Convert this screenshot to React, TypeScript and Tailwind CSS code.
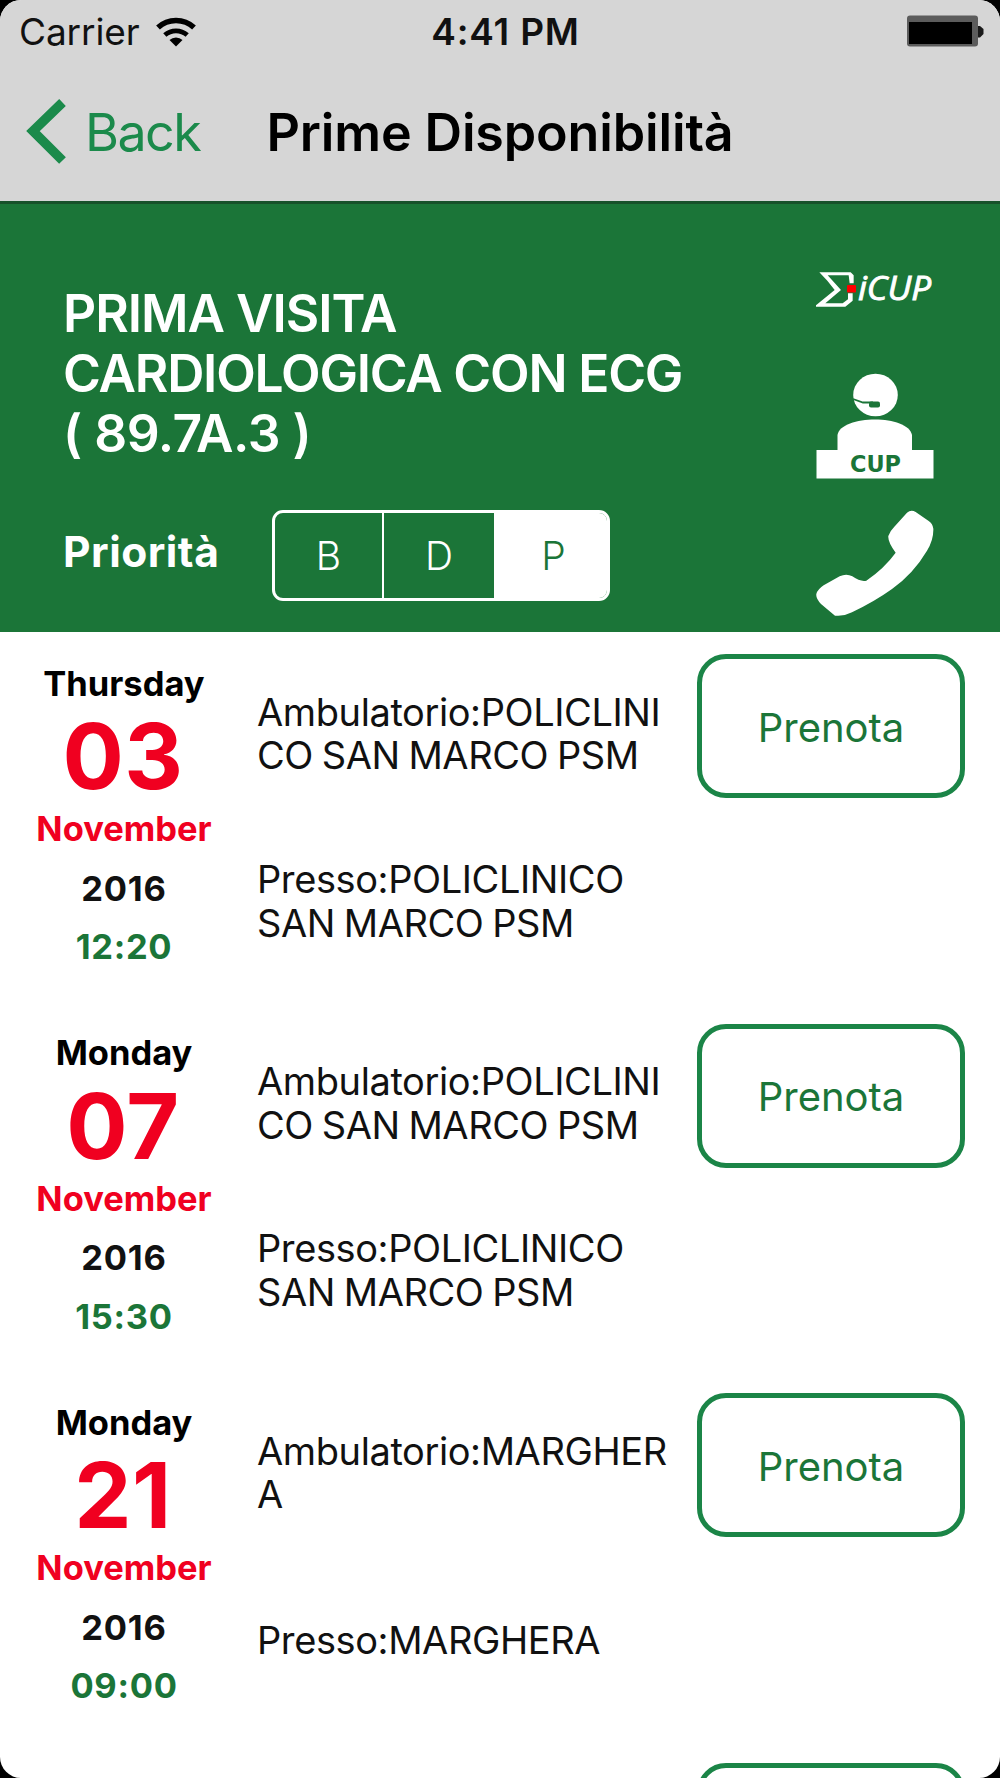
interface Slot {
  day: string
  date: string
  month: string
  year: string
  time: string
  clinic: string[]
  place: string[]
}

const SLOTS: Slot[] = [
  {
    day: 'Thursday',
    date: '03',
    month: 'November',
    year: '2016',
    time: '12:20',
    clinic: ['Ambulatorio:POLICLINI', 'CO SAN MARCO PSM'],
    place: ['Presso:POLICLINICO', 'SAN MARCO PSM'],
  },
  {
    day: 'Monday',
    date: '07',
    month: 'November',
    year: '2016',
    time: '15:30',
    clinic: ['Ambulatorio:POLICLINI', 'CO SAN MARCO PSM'],
    place: ['Presso:POLICLINICO', 'SAN MARCO PSM'],
  },
  {
    day: 'Monday',
    date: '21',
    month: 'November',
    year: '2016',
    time: '09:00',
    clinic: ['Ambulatorio:MARGHER', 'A'],
    place: ['Presso:MARGHERA'],
  },
]

function WifiIcon() {
  return (
    <svg width="40" height="32" viewBox="0 0 40 32" fill="none" stroke="#000" aria-hidden="true">
      <path d="M2 12.5 A26.5 26.5 0 0 1 38 12.5" strokeWidth="5.5" />
      <path d="M8.8 20 A17 17 0 0 1 31.2 20" strokeWidth="4.8" />
      <path d="M13.5 25 A9.5 9.5 0 0 1 26.5 25 L20 31.5 Z" fill="#000" stroke="none" />
    </svg>
  )
}

function BatteryIcon() {
  return (
    <svg width="78" height="32" viewBox="0 0 78 32" aria-hidden="true">
      <rect x="0" y="0.5" width="71" height="31" rx="3" fill="#5c5c5c" />
      <rect x="2" y="7" width="63" height="22" fill="#000" />
      <path d="M71 11 H73 L76.5 14 V19 L73 22.5 H71 Z" fill="#1a1a1a" />
    </svg>
  )
}

function StatusBar() {
  return (
    <div className="grid h-[62px] grid-cols-3 items-center text-[37px] leading-[60px] text-[#111]">
      <div className="flex items-center pl-[19px]">
        <span className="pt-[2px] tracking-[-0.1px]">Carrier</span>
        <span className="ml-[16px] flex">
          <WifiIcon />
        </span>
      </div>
      <span className="pt-[2px] pl-[11px] text-center font-semibold tracking-[0.8px]">4:41 PM</span>
      <div className="flex justify-end pr-[15px]">
        <BatteryIcon />
      </div>
    </div>
  )
}

function NavBar() {
  return (
    <div className="relative flex h-[139px] items-center justify-center">
      <button className="absolute left-[26px] flex items-center text-[52px] text-[#1b8a4b]">
        <svg width="42" height="67" viewBox="0 0 42 67" fill="none" aria-hidden="true">
          <path d="M36.5 4.5 L7 33 L36.5 62.5" stroke="currentColor" strokeWidth="9.5" />
        </svg>
        <span className="ml-[17px] pt-[2px] tracking-[-1.6px]">Back</span>
      </button>
      <h1 className="pt-[2px] text-[52px] font-semibold tracking-[-0.15px] text-black">Prime Disponibilità</h1>
    </div>
  )
}

function ICupLogo() {
  return (
    <svg width="120" height="38" viewBox="0 0 120 38" className="overflow-visible" aria-hidden="true">
      <g transform="scale(0.3333) translate(-105 -90)" fill="#fff">
        <path d="M118 97 H212 L221 106 V130 H209 L206 106 H143 L183 150 L136 190 H188 L204 178 V160 H218 V182 L196 200 H108 V196 L164 150 L142 122 Z" />
      </g>
      <rect x="32" y="15" width="9" height="7.5" rx="1" fill="#f00" />
      <text
        x="43"
        y="30"
        fill="#fff"
        stroke="#fff"
        strokeWidth="0.9"
        fontFamily="'Open Sans', 'Noto Sans', sans-serif"
        fontStyle="italic"
        fontSize="33"
        textLength="73"
        lengthAdjust="spacingAndGlyphs"
      >
        iCUP
      </text>
    </svg>
  )
}

function OperatorIcon() {
  return (
    <svg width="120" height="106" viewBox="0 0 120 106" aria-hidden="true">
      <ellipse cx="60.5" cy="22" rx="22.3" ry="21.3" fill="#fff" />
      <path d="M38 26 L48 29.5 H58" stroke="#1b7538" strokeWidth="1.8" fill="none" />
      <rect x="54" y="28.5" width="11" height="6" rx="2" fill="#1b7538" />
      <path d="M22.5 78 V62 C24 52 42 46.5 60 46.5 C78 46.5 95 52 97 62 V78 Z" fill="#fff" />
      <rect x="1.5" y="77" width="117" height="28.5" fill="#fff" />
      <text
        x="35"
        y="98.5"
        fill="#1b7538"
        fontFamily="'DejaVu Sans', sans-serif"
        fontWeight="700"
        fontSize="23.5"
        textLength="51"
        lengthAdjust="spacingAndGlyphs"
      >
        CUP
      </text>
    </svg>
  )
}

function PhoneIcon() {
  return (
    <svg width="118" height="107" viewBox="107 810 354 321" fill="#fff" aria-hidden="true">
      <path d="M380 818 Q392 808 406 816 L444 842 Q457 850 459 866 Q460 900 440 932 Q400 1000 335 1047 Q285 1083 215 1117 Q190 1130 164 1127 L122 1092 Q106 1074 108 1062 Q112 1048 130 1036 L178 1009 Q198 1000 216 1009 Q240 1026 258 1022 Q312 985 346 938 Q322 905 324 888 Q328 874 342 860 Z" />
    </svg>
  )
}

function ServiceHeader() {
  return (
    <section className="flex h-[431px] shrink-0 justify-between border-t-[3px] border-[#17512a] bg-[#1b7538] pr-[65px] pl-[63px] text-white">
      <div>
        <h2 className="mt-[79px] text-[51.5px] leading-[60px] font-semibold whitespace-nowrap">
          <span className="block tracking-[-1px]">PRIMA VISITA</span>
          <span className="block tracking-[-1.2px]">CARDIOLOGICA CON ECG</span>
          <span className="block tracking-[-0.5px]">( 89.7A.3 )</span>
        </h2>
        <div className="mt-[47px] flex items-start">
          <span className="mt-[12px] w-[209px] text-[42.5px] leading-[60px] font-bold tracking-[0.5px]">
            Priorità
          </span>
          <div className="flex h-[91px] w-[338px] overflow-hidden rounded-[11px] border-[3px] border-white text-[39px] font-light">
            <span className="flex w-[109px] items-center justify-center border-r-2 border-white pt-0.5">B</span>
            <span className="flex w-[110px] items-center justify-center pt-0.5">D</span>
            <span className="flex flex-1 items-center justify-center bg-white pt-0.5 pl-1.5 text-[#1b7538]">P</span>
          </div>
        </div>
      </div>
      <div className="flex flex-col items-center pt-[66px]">
        <ICupLogo />
        <div className="mt-[65px]">
          <OperatorIcon />
        </div>
        <div className="mt-[31px]">
          <PhoneIcon />
        </div>
      </div>
    </section>
  )
}

function SlotRow({ slot }: { slot: Slot }) {
  return (
    <li className="flex h-[369.5px] shrink-0 items-start">
      <div className="flex w-[248px] flex-col items-center pt-[27.5px] text-[34.5px] leading-[48px] font-bold">
        <span>{slot.day}</span>
        <span className="mt-[3.5px] pr-[2px] text-[91px] leading-[90px] tracking-[0.5px] text-[#f00020]">
          {slot.date}
        </span>
        <span className="mt-1 text-[#f00020]">{slot.month}</span>
        <span className="mt-[11.5px] tracking-[0.8px] text-[#111]">{slot.year}</span>
        <span className="mt-[10.5px] tracking-[0.7px] text-[#1b7538]">{slot.time}</span>
      </div>
      <div className="w-[449px] pt-[58.5px] pl-[9px] text-[38px] leading-[43.7px] tracking-[-0.4px] whitespace-nowrap text-[#111] [word-spacing:-1.6px]">
        <div className="flex h-[87.4px] flex-col justify-center">
          {slot.clinic.map((line) => (
            <span key={line}>{line}</span>
          ))}
        </div>
        <div className="mt-[80px] flex h-[87.4px] flex-col justify-center">
          {slot.place.map((line) => (
            <span key={line}>{line}</span>
          ))}
        </div>
      </div>
      <BookButton label="Prenota" />
    </li>
  )
}

function BookButton({ label }: { label?: string }) {
  return (
    <button className="mt-[22px] h-[144px] w-[268px] rounded-[29px] border-[5px] border-[#1b8547] pt-[3px] text-[40px] text-[#1b7538]">
      {label}
    </button>
  )
}

export default function App() {
  return (
    <div className="bg-black">
      <main className="flex h-[1778px] w-[1000px] flex-col overflow-hidden rounded-[21px] bg-white font-['Inter',sans-serif]">
        <header className="shrink-0 bg-[#d6d6d6]">
          <StatusBar />
          <NavBar />
        </header>
        <ServiceHeader />
        <ul className="flex flex-col">
          {SLOTS.map((slot) => (
            <SlotRow key={slot.date} slot={slot} />
          ))}
          {/* next slot, only its button peeks in */}
          <li className="flex shrink-0 pl-[697px]">
            <BookButton />
          </li>
        </ul>
      </main>
    </div>
  )
}
